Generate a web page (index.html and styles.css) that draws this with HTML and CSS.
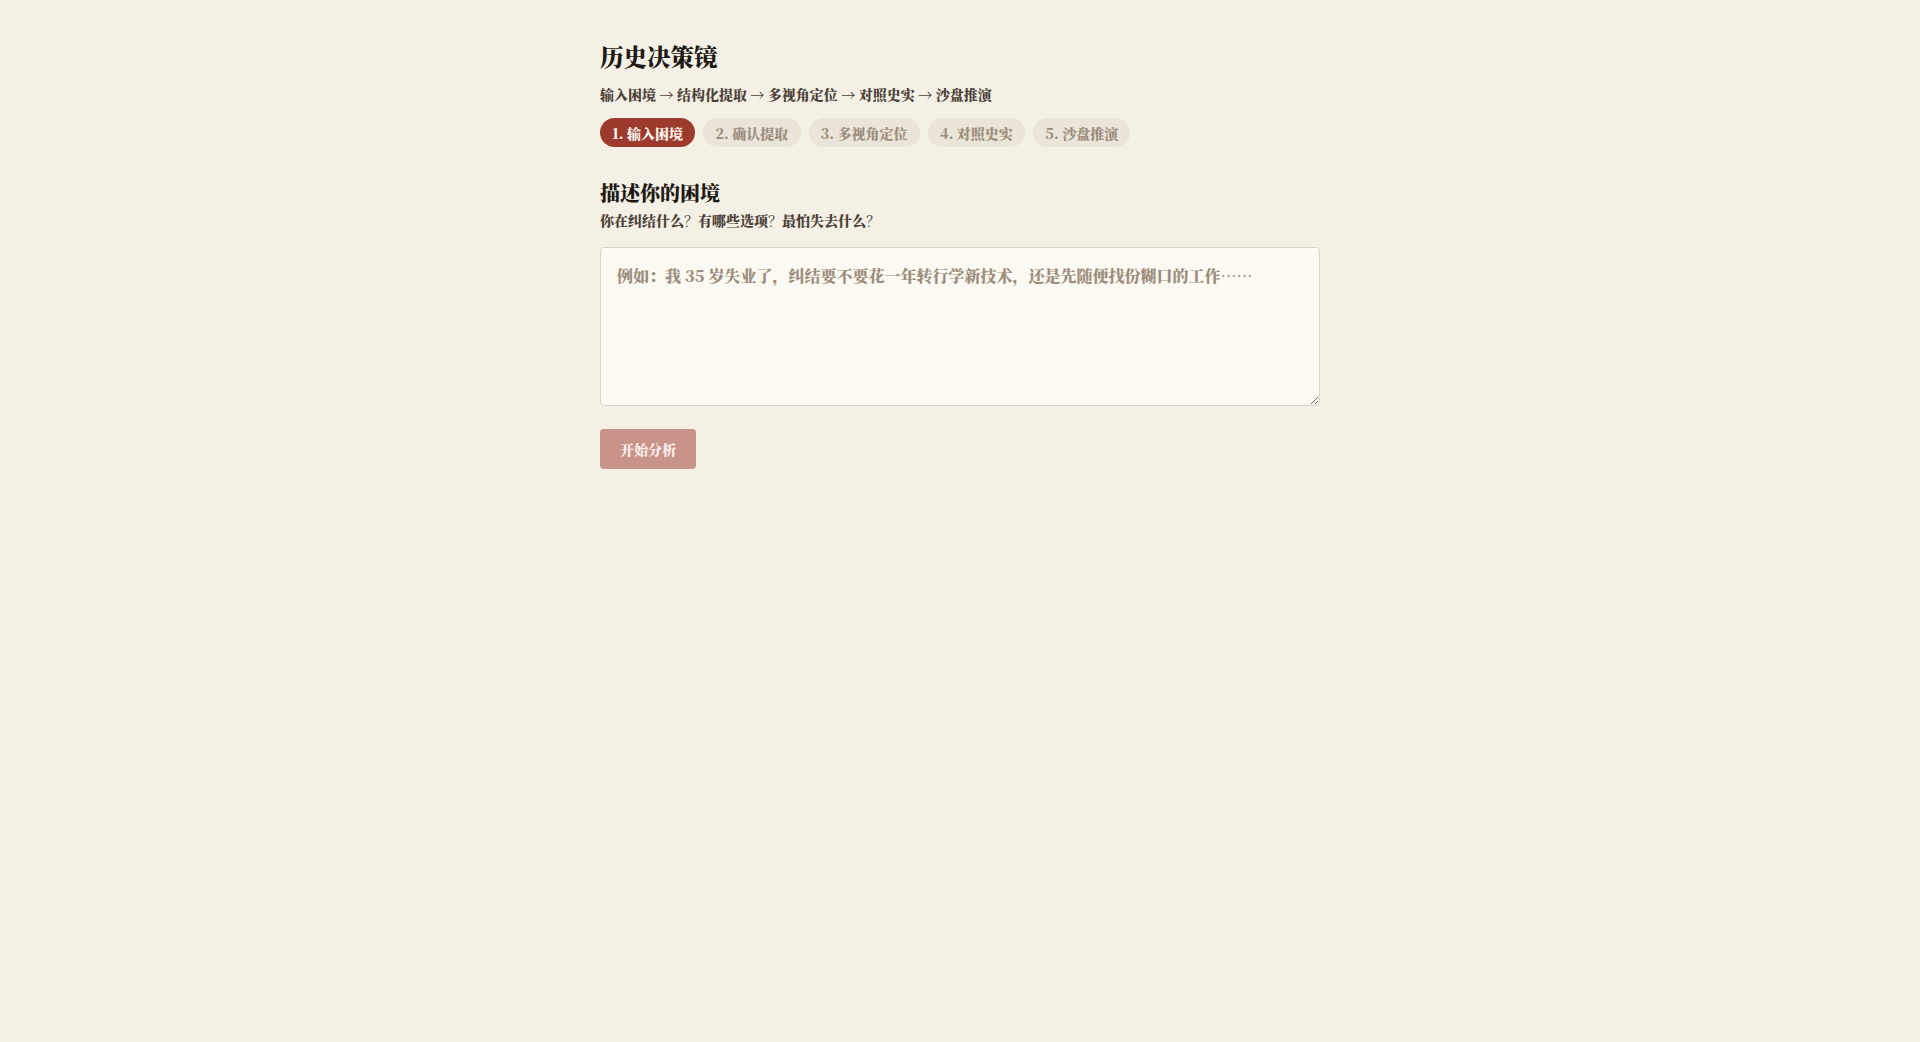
FILE: index.html
```html
<!DOCTYPE html>
<html lang="zh-CN">
<head>
<meta charset="utf-8">
<title>历史决策镜</title>
<link rel="stylesheet" href="styles.css">
</head>
<body>
<main class="app">
  <h1 class="title">历史决策镜</h1>
  <p class="pipeline">输入困境 → 结构化提取 → 多视角定位 → 对照史实 → 沙盘推演</p>
  <nav class="steps">
    <span class="step active">1. 输入困境</span>
    <span class="step">2. 确认提取</span>
    <span class="step">3. 多视角定位</span>
    <span class="step">4. 对照史实</span>
    <span class="step">5. 沙盘推演</span>
  </nav>
  <section class="panel">
    <h2 class="panel-title">描述你的困境</h2>
    <p class="panel-hint">你在纠结什么<span class="q">？</span>有哪些选项<span class="q">？</span>最怕失去什么<span class="q">？</span></p>
    <textarea class="dilemma" placeholder="例如：我 35 岁失业了，纠结要不要花一年转行学新技术，还是先随便找份糊口的工作……"></textarea>
    <button class="primary" disabled>开始分析</button>
  </section>
</main>
</body>
</html>
```

FILE: styles.css
```css
html, body {
  margin: 0;
  padding: 0;
  background: #f4f0e6;
}
body {
  font-family: "Noto Serif CJK SC", "Source Han Serif SC", "Noto Serif SC", serif;
  color: #221c18;
}
.app {
  max-width: 720px;
  margin: 0 auto;
  padding-top: 40px;
}
.title {
  margin: 0;
  font-size: 23.5px;
  line-height: 32px;
  font-weight: 900;
  color: #1e1915;
}
.pipeline {
  margin: 12px 0 0;
  font-size: 14px;
  line-height: 20px;
  font-weight: 900;
  color: #4d4238;
}
.steps {
  display: flex;
  gap: 8px;
  margin-top: 14px;
}
.step {
  display: inline-block;
  padding: 5px 12.25px 4px;
  font-size: 14px;
  line-height: 20px;
  font-weight: 900;
  border-radius: 999px;
  background: #ebe4d8;
  color: #9c8e7d;
}
.step.active {
  background: #9d3a2e;
  color: #fbf3ec;
}
.panel {
  margin-top: 32px;
}
.panel-title {
  margin: 0;
  font-size: 20px;
  line-height: 28px;
  font-weight: 900;
  color: #1e1915;
}
.panel-hint {
  margin: 3px 0 0;
  font-size: 14px;
  line-height: 20px;
  font-weight: 900;
  color: #4d4238;
}
.panel-hint .q {
  font-weight: 400;
}
.dilemma {
  display: block;
  box-sizing: border-box;
  width: 100%;
  height: 159px;
  margin-top: 17px;
  padding: 15px 16px;
  border: 1px solid #dcd2c2;
  border-radius: 4px;
  background: #fcf9f3;
  font-family: inherit;
  font-size: 16px;
  line-height: 26px;
  font-weight: 900;
  color: #221c18;
  resize: vertical;
  outline: none;
}
.dilemma::placeholder {
  color: #9c8e7d;
}
.primary {
  display: block;
  margin-top: 23px;
  height: 40px;
  padding: 0 20px;
  border: none;
  border-radius: 4px;
  background: #c9938a;
  color: #f8ede8;
  font-family: inherit;
  font-size: 14px;
  font-weight: 900;
  cursor: not-allowed;
}
```
